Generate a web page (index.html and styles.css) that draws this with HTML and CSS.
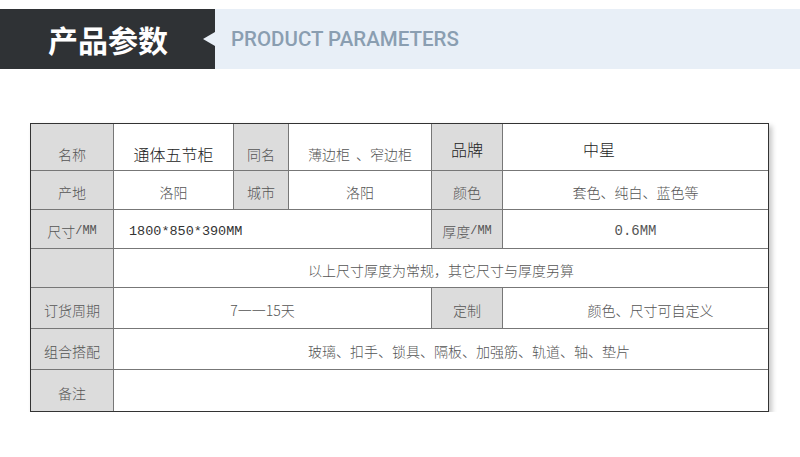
FILE: index.html
```html
<!DOCTYPE html>
<html lang="zh-CN">
<head>
<meta charset="utf-8">
<title>产品参数</title>
<link rel="stylesheet" href="styles.css">
</head>
<body>
<header class="banner">
  <div class="banner-title">产品参数<span class="notch"></span></div>
  <div class="banner-sub">PRODUCT PARAMETERS</div>
</header>
<section class="params">
  <div class="grid">
    <div class="cell label first">名称</div>
    <div class="cell strong first">通体五节柜</div>
    <div class="cell label first">同名</div>
    <div class="cell first">薄边柜  、窄边柜</div>
    <div class="cell label strong">品牌</div>
    <div class="cell strong brand">中星</div>

    <div class="cell label">产地</div>
    <div class="cell">洛阳</div>
    <div class="cell label">城市</div>
    <div class="cell">洛阳</div>
    <div class="cell label">颜色</div>
    <div class="cell">套色、纯白、蓝色等</div>

    <div class="cell label">尺寸<span class="mono">/MM</span></div>
    <div class="cell span3 left mono size">1800*850*390MM</div>
    <div class="cell label">厚度<span class="mono">/MM</span></div>
    <div class="cell mono">0.6MM</div>

    <div class="cell label"></div>
    <div class="cell span5">以上尺寸厚度为常规，其它尺寸与厚度另算</div>

    <div class="cell label">订货周期</div>
    <div class="cell span3 cycle">7一一15天</div>
    <div class="cell label">定制</div>
    <div class="cell custom">颜色、尺寸可自定义</div>

    <div class="cell label">组合搭配</div>
    <div class="cell span5 combo">玻璃、扣手、锁具、隔板、加强筋、轨道、轴、垫片</div>

    <div class="cell label">备注</div>
    <div class="cell span5"></div>
  </div>
</section>
</body>
</html>
```

FILE: styles.css
```css
html, body {
  margin: 0;
  padding: 0;
  background: #ffffff;
}

body {
  font-family: "Noto Sans CJK SC", "Liberation Sans", sans-serif;
}

.banner {
  margin-top: 9px;
  height: 60px;
  display: flex;
}

.banner-title {
  position: relative;
  width: 215px;
  box-sizing: border-box;
  padding-left: 48px;
  background: #2f3235;
  color: #ffffff;
  font-size: 30px;
  font-weight: 700;
  display: flex;
  align-items: center;
}

.notch {
  position: absolute;
  right: 0;
  top: 50%;
  transform: translateY(-50%);
  width: 0;
  height: 0;
  border-top: 7px solid transparent;
  border-bottom: 7px solid transparent;
  border-right: 12px solid #e8eff7;
}

.banner-sub {
  flex: 1;
  background: #e8eff7;
  color: #8a9eb1;
  font-family: Roboto, "Liberation Sans", sans-serif;
  font-size: 20.5px;
  font-weight: 500;
  padding-left: 16px;
  display: flex;
  align-items: center;
}

.params {
  padding: 54px 0 0 30px;
}

.grid {
  display: grid;
  width: 737px;
  grid-template-columns: 82px 119px 54px 142px 70px 265px;
  grid-template-rows: 46px 38px 38px 38px 40px 40px 41px;
  gap: 1px;
  background: #777777;
  border: 1px solid #333333;
  box-shadow: 3px 3px 5px rgba(0, 0, 0, 0.22);
}

.cell {
  background: #ffffff;
  color: #555555;
  font-size: 14px;
  font-weight: 300;
  display: flex;
  align-items: center;
  justify-content: center;
  padding-top: 4px;
  box-sizing: border-box;
  white-space: pre;
}

.label {
  background: #dcdcdc;
}

.first {
  padding-top: 14px;
}

.strong {
  color: #222222;
  font-size: 16px;
}

.brand {
  justify-content: flex-start;
  padding-left: 80px;
}

.span3 {
  grid-column: span 3;
}

.span5 {
  grid-column: span 5;
}

.left {
  justify-content: flex-start;
  padding-left: 15px;
}

.mono {
  font-family: "Liberation Mono", "DejaVu Sans Mono", monospace;
}

.label .mono {
  font-size: 12px;
}

.size {
  font-size: 13.5px;
  color: #333333;
}

.cycle {
  padding-right: 20px;
}

.custom {
  padding-left: 30px;
}

.combo {
  padding-left: 56px;
}
```
